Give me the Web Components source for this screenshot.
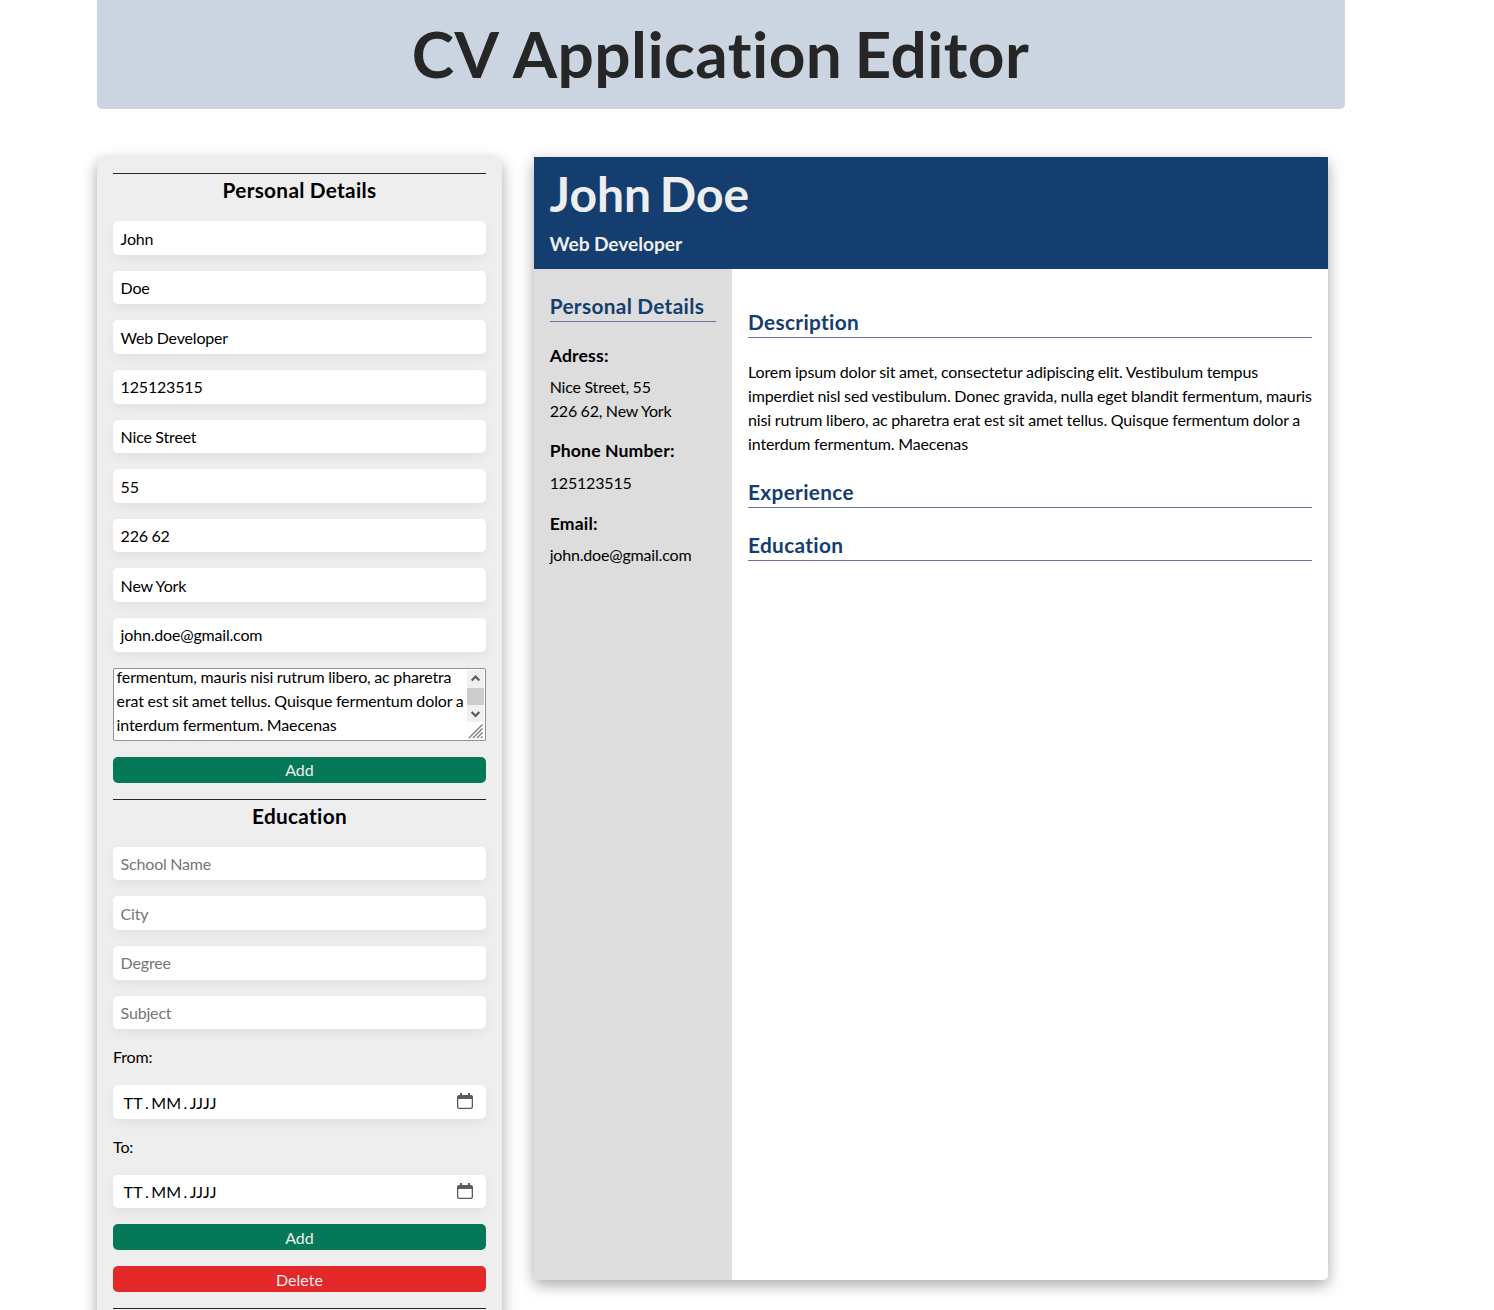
<!DOCTYPE html>
<html lang="en">
<head>
<meta charset="utf-8">
<title>CV Application Editor</title>
<style>
html{height:1310px;overflow:hidden}
body{margin:0;background:#fff;font:16px/24px Lato,sans-serif;color:#000;height:1310px;overflow:hidden;font-variant-ligatures:none;letter-spacing:-.12px;word-spacing:-.3px}
</style>
</head>
<body>
<cv-app></cv-app>
<script>
const define = (name, html) => {
  const t = document.createElement('template');
  t.innerHTML = html;
  customElements.define(name, class extends HTMLElement {
    constructor() {
      super();
      this.attachShadow({ mode: 'open' }).append(t.content.cloneNode(true));
    }
  });
};

define('page-title', `<style>
:host{display:block;background:#cbd5e1;color:#262626;height:109px;border-radius:0 0 5px 5px;box-sizing:border-box;padding-top:6px}
h1{margin:0;font-size:64px;line-height:96px;font-weight:700;text-align:center;padding-right:1px;letter-spacing:.4px;word-spacing:-3.8px}
</style><h1><slot></slot></h1>`);

define('form-section', `<style>
:host{display:flex;flex-direction:column;gap:16px;border-top:1px solid #262626}
h2{margin:0;font-size:20.8px;line-height:31.2px;font-weight:700;text-align:center;letter-spacing:.3px}
</style><h2><slot name="title"></slot></h2><slot></slot>`);

define('text-field', `<style>
:host{display:block;box-sizing:border-box;height:33.6px;padding:5.38px 7.6px 0;background:#fff;border-radius:5px;box-shadow:0 4px 12px rgba(0,0,0,.06);white-space:nowrap;letter-spacing:-.18px}
:host([placeholder]){color:#757575}
</style><slot></slot>`);

define('date-field', `<style>
:host{display:flex;justify-content:space-between;box-sizing:border-box;height:33.6px;padding:5.4px 12px 0 10.5px;background:#fff;border-radius:5px;box-shadow:0 4px 12px rgba(0,0,0,.06)}
.d{display:flex;gap:2.2px;letter-spacing:.2px}
svg{display:block;margin:1.4px 0 0}
</style><span class="d"><span>TT</span><span>.</span><span>MM</span><span>.</span><span>JJJJ</span></span>
<svg width="18" height="18" viewBox="0 0 18 18"><path d="M4 1h2v2h6V1h2v2h1a2 2 0 0 1 2 2v10a2 2 0 0 1-2 2H3a2 2 0 0 1-2-2V5a2 2 0 0 1 2-2h1zM2.3 7v7.7q0 1 1 1h11.4q1 0 1-1V7z" fill="#5b5b5b" fill-rule="evenodd"/></svg>`);

define('text-area', `<style>
:host{display:flex;box-sizing:border-box;height:73px;padding:1px 1px 0 2.6px;background:#fff;border:1px solid #8f8f9d;border-radius:2px;overflow:hidden}
.t{margin-top:-5px;white-space:nowrap;flex:0 0 350.4px;width:350.4px}
svg{display:block;flex:none}
</style><div class="t"><slot></slot></div>
<svg width="18" height="70" viewBox="0 0 18 70"><path d="M0 0h17v52H0z" fill="#f0f0f0"/><path d="M0 18h17v17H0z" fill="#cdcdcd"/><path d="M4.7 10.5l3.8-4 3.8 4M4.7 42l3.8 4 3.8-4" fill="none" stroke="#5b5b5b" stroke-width="2.2"/><path d="M2 68L15.5 54.5M6 68l9.5-9.5M10 68l5.5-5.5M14 68l1.5-1.5" stroke="#77777b" stroke-width="1.2"/></svg>`);

define('form-button', `<style>
:host{display:block;height:26px;line-height:26.9px;border-radius:5px;background:#047857;color:#eee;text-align:center;letter-spacing:.05px}
:host([danger]){background:#e22828}
:host([low]){line-height:28px}
</style><slot></slot>`);

define('editor-panel', `<style>
:host{display:flex;flex-direction:column;gap:16px;box-sizing:border-box;width:405px;height:1200px;padding:16px;background:#eee;border-radius:8px;box-shadow:0 5px 15px rgba(0,0,0,.35)}
</style>
<form-section><span slot="title">Personal Details</span>
<text-field>John</text-field><text-field>Doe</text-field><text-field>Web Developer</text-field><text-field>125123515</text-field><text-field>Nice Street</text-field><text-field>55</text-field><text-field>226 62</text-field><text-field>New York</text-field><text-field>john.doe@gmail.com</text-field>
<text-area>fermentum, mauris nisi rutrum libero, ac pharetra<br>erat est sit amet tellus. Quisque fermentum dolor a<br>interdum fermentum. Maecenas</text-area>
<form-button>Add</form-button></form-section>
<form-section><span slot="title">Education</span>
<text-field placeholder>School Name</text-field><text-field placeholder>City</text-field><text-field placeholder>Degree</text-field><text-field placeholder>Subject</text-field>
<span>From:</span><date-field></date-field><span>To:</span><date-field></date-field>
<form-button low>Add</form-button><form-button low danger>Delete</form-button></form-section>
<form-section></form-section>`);

define('cv-heading', `<style>
:host{display:block;margin:20.8px 0;border-bottom:1px solid #64779a;color:#143d70}
h2{margin:0;font-size:20.8px;line-height:31.2px;font-weight:700;letter-spacing:.34px}
</style><h2><slot></slot></h2>`);

define('cv-detail', `<style>
:host{display:block;margin-bottom:15.6px;letter-spacing:-.18px}
h3{margin:0 0 6px;font-size:17.6px;line-height:26.4px;font-weight:700;letter-spacing:.17px}
</style><h3><slot name="label"></slot></h3><slot></slot>`);

define('cv-preview', `<style>
:host{display:flex;flex-direction:column;width:794px;height:1123px;background:#fff;border-radius:0 0 5px 5px;box-shadow:0 5px 15px rgba(0,0,0,.35);overflow:hidden}
header{box-sizing:border-box;height:112px;padding:1px 15.6px 0;background:#143d70;color:#eee}
h1{margin:0;font-size:48px;line-height:72px;letter-spacing:0;word-spacing:-3px}
.role{font-size:19.2px;line-height:28.8px;font-weight:700;letter-spacing:-.05px}
.b{flex:1;display:grid;grid-template-columns:198px minmax(0,1fr)}
aside{background:#ddd;padding:0 16px 0 15.7px}
aside cv-heading{margin-bottom:20.8px}
.adr{margin-bottom:15.1px}
.tel{margin-bottom:16px}
main{padding:16px}
p{margin:21.8px 0 20px;white-space:nowrap}
</style>
<header><h1>John Doe</h1><div class="role">Web Developer</div></header>
<div class="b"><aside><cv-heading>Personal Details</cv-heading>
<cv-detail class="adr"><span slot="label">Adress:</span>Nice Street, 55<br>226 62, New York</cv-detail>
<cv-detail class="tel"><span slot="label">Phone Number:</span>125123515</cv-detail>
<cv-detail><span slot="label">Email:</span>john.doe@gmail.com</cv-detail></aside>
<main><cv-heading>Description</cv-heading>
<p>Lorem ipsum dolor sit amet, consectetur adipiscing elit. Vestibulum tempus<br>imperdiet nisl sed vestibulum. Donec gravida, nulla eget blandit fermentum, mauris<br>nisi rutrum libero, ac pharetra erat est sit amet tellus. Quisque fermentum dolor a<br>interdum fermentum. Maecenas</p>
<cv-heading style="margin-top:0">Experience</cv-heading><cv-heading>Education</cv-heading></main></div>`);

define('cv-app', `<style>
:host{display:block;width:1248px;margin-left:97px}
.cols{display:flex;gap:32px;align-items:flex-start;margin-top:48px}
.cv{margin-right:3.5px}
</style><page-title><span class="cv">CV</span> Application Editor</page-title>
<div class="cols"><editor-panel></editor-panel><cv-preview></cv-preview></div>`);
</script>
</body>
</html>
